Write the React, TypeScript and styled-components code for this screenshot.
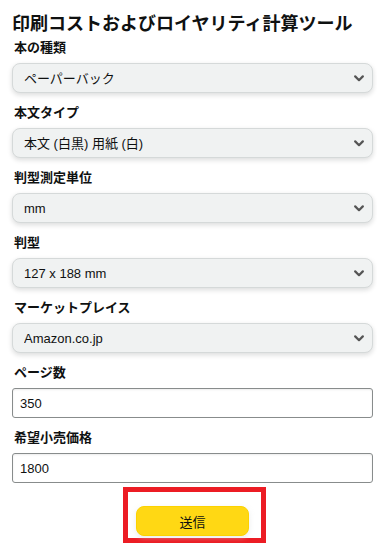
import React from 'react';
import styled, { createGlobalStyle } from 'styled-components';

const GlobalStyle = createGlobalStyle`
  html, body {
    margin: 0;
    padding: 0;
    background: #ffffff;
  }

  body {
    font-family: 'Liberation Sans', 'Noto Sans CJK JP', sans-serif;
    color: #0f1111;
  }
`;

const Page = styled.div`
  padding: 12px 4px 0 12px;
`;

const Title = styled.h1`
  margin: 0 0 2px;
  font-size: 18px;
  line-height: 24px;
  font-weight: 700;
  color: #0f1111;
  white-space: nowrap;
`;

const Form = styled.form`
  display: flex;
  flex-direction: column;
  gap: 10px;
`;

const Field = styled.div`
  display: flex;
  flex-direction: column;
  gap: 5px;
`;

const Label = styled.label`
  display: block;
  padding-left: 2px;
  font-size: 13px;
  line-height: 20px;
  font-weight: 700;
  color: #0f1111;
`;

const SelectWrap = styled.div`
  position: relative;
  height: 30px;
`;

const Select = styled.select`
  appearance: none;
  width: 100%;
  height: 30px;
  margin: 0;
  padding: 0 28px 0 11px;
  border: 1px solid #d5d9d9;
  border-radius: 8px;
  background: #f0f2f2;
  box-shadow: 0 2px 5px rgba(15, 17, 17, 0.15);
  font-family: inherit;
  font-size: 13px;
  color: #0f1111;
  outline: none;
`;

const Chevron = styled.svg`
  position: absolute;
  right: 9px;
  top: 12px;
  width: 10px;
  height: 7px;
  pointer-events: none;
`;

const Input = styled.input`
  box-sizing: border-box;
  width: 100%;
  height: 30px;
  margin: 0;
  padding: 0 7px;
  border: 1px solid #888c8c;
  border-radius: 3px;
  background: #ffffff;
  box-shadow: inset 0 1px 2px rgba(15, 17, 17, 0.08);
  font-family: inherit;
  font-size: 13px;
  color: #0f1111;
  outline: none;
`;

const Footer = styled.div`
  display: flex;
  justify-content: center;
  margin-top: -6px;
`;

const Highlight = styled.div`
  display: flex;
  margin-left: 4px;
  padding: 14px 12px 2px 8px;
  border: 5px solid #ec1c24;
`;

const SubmitButton = styled.button`
  width: 113px;
  height: 30px;
  border: 1px solid #fcd200;
  border-radius: 8px;
  background: #ffd814;
  box-shadow: 0 2px 5px rgba(213, 217, 217, 0.5);
  font-family: inherit;
  font-size: 13px;
  color: #0f1111;
  cursor: pointer;
`;

type SelectFieldProps = {
  id: string;
  label: string;
  options: string[];
};

const SelectField: React.FC<SelectFieldProps> = ({ id, label, options }) => (
  <Field>
    <Label htmlFor={id}>{label}</Label>
    <SelectWrap>
      <Select id={id} defaultValue={options[0]}>
        {options.map((o) => (
          <option key={o}>{o}</option>
        ))}
      </Select>
      <Chevron viewBox="0 0 10 7">
        <path d="M1.2 1.4 L5 5.2 L8.8 1.4" fill="none" stroke="#555" strokeWidth="2.2" strokeLinecap="round" strokeLinejoin="round" />
      </Chevron>
    </SelectWrap>
  </Field>
);

type InputFieldProps = {
  id: string;
  label: string;
  value: string;
};

const InputField: React.FC<InputFieldProps> = ({ id, label, value }) => (
  <Field>
    <Label htmlFor={id}>{label}</Label>
    <Input id={id} type="text" defaultValue={value} />
  </Field>
);

const selects: SelectFieldProps[] = [
  { id: 'format', label: '本の種類', options: ['ペーパーバック', 'ハードカバー'] },
  { id: 'interior', label: '本文タイプ', options: ['本文 (白黒) 用紙 (白)', '本文 (白黒) 用紙 (クリーム)'] },
  { id: 'unit', label: '判型測定単位', options: ['mm', 'インチ'] },
  { id: 'trim', label: '判型', options: ['127 x 188 mm', '152.4 x 228.6 mm'] },
  { id: 'market', label: 'マーケットプレイス', options: ['Amazon.co.jp', 'Amazon.com'] },
];

export default function App() {
  return (
    <>
      <GlobalStyle />
      <Page>
        <Title>印刷コストおよびロイヤリティ計算ツール</Title>
        <Form onSubmit={(e) => e.preventDefault()}>
          {selects.map((s) => (
            <SelectField key={s.id} {...s} />
          ))}
          <InputField id="pages" label="ページ数" value="350" />
          <InputField id="price" label="希望小売価格" value="1800" />
          <Footer>
            <Highlight>
              <SubmitButton type="submit">送信</SubmitButton>
            </Highlight>
          </Footer>
        </Form>
      </Page>
    </>
  );
}
